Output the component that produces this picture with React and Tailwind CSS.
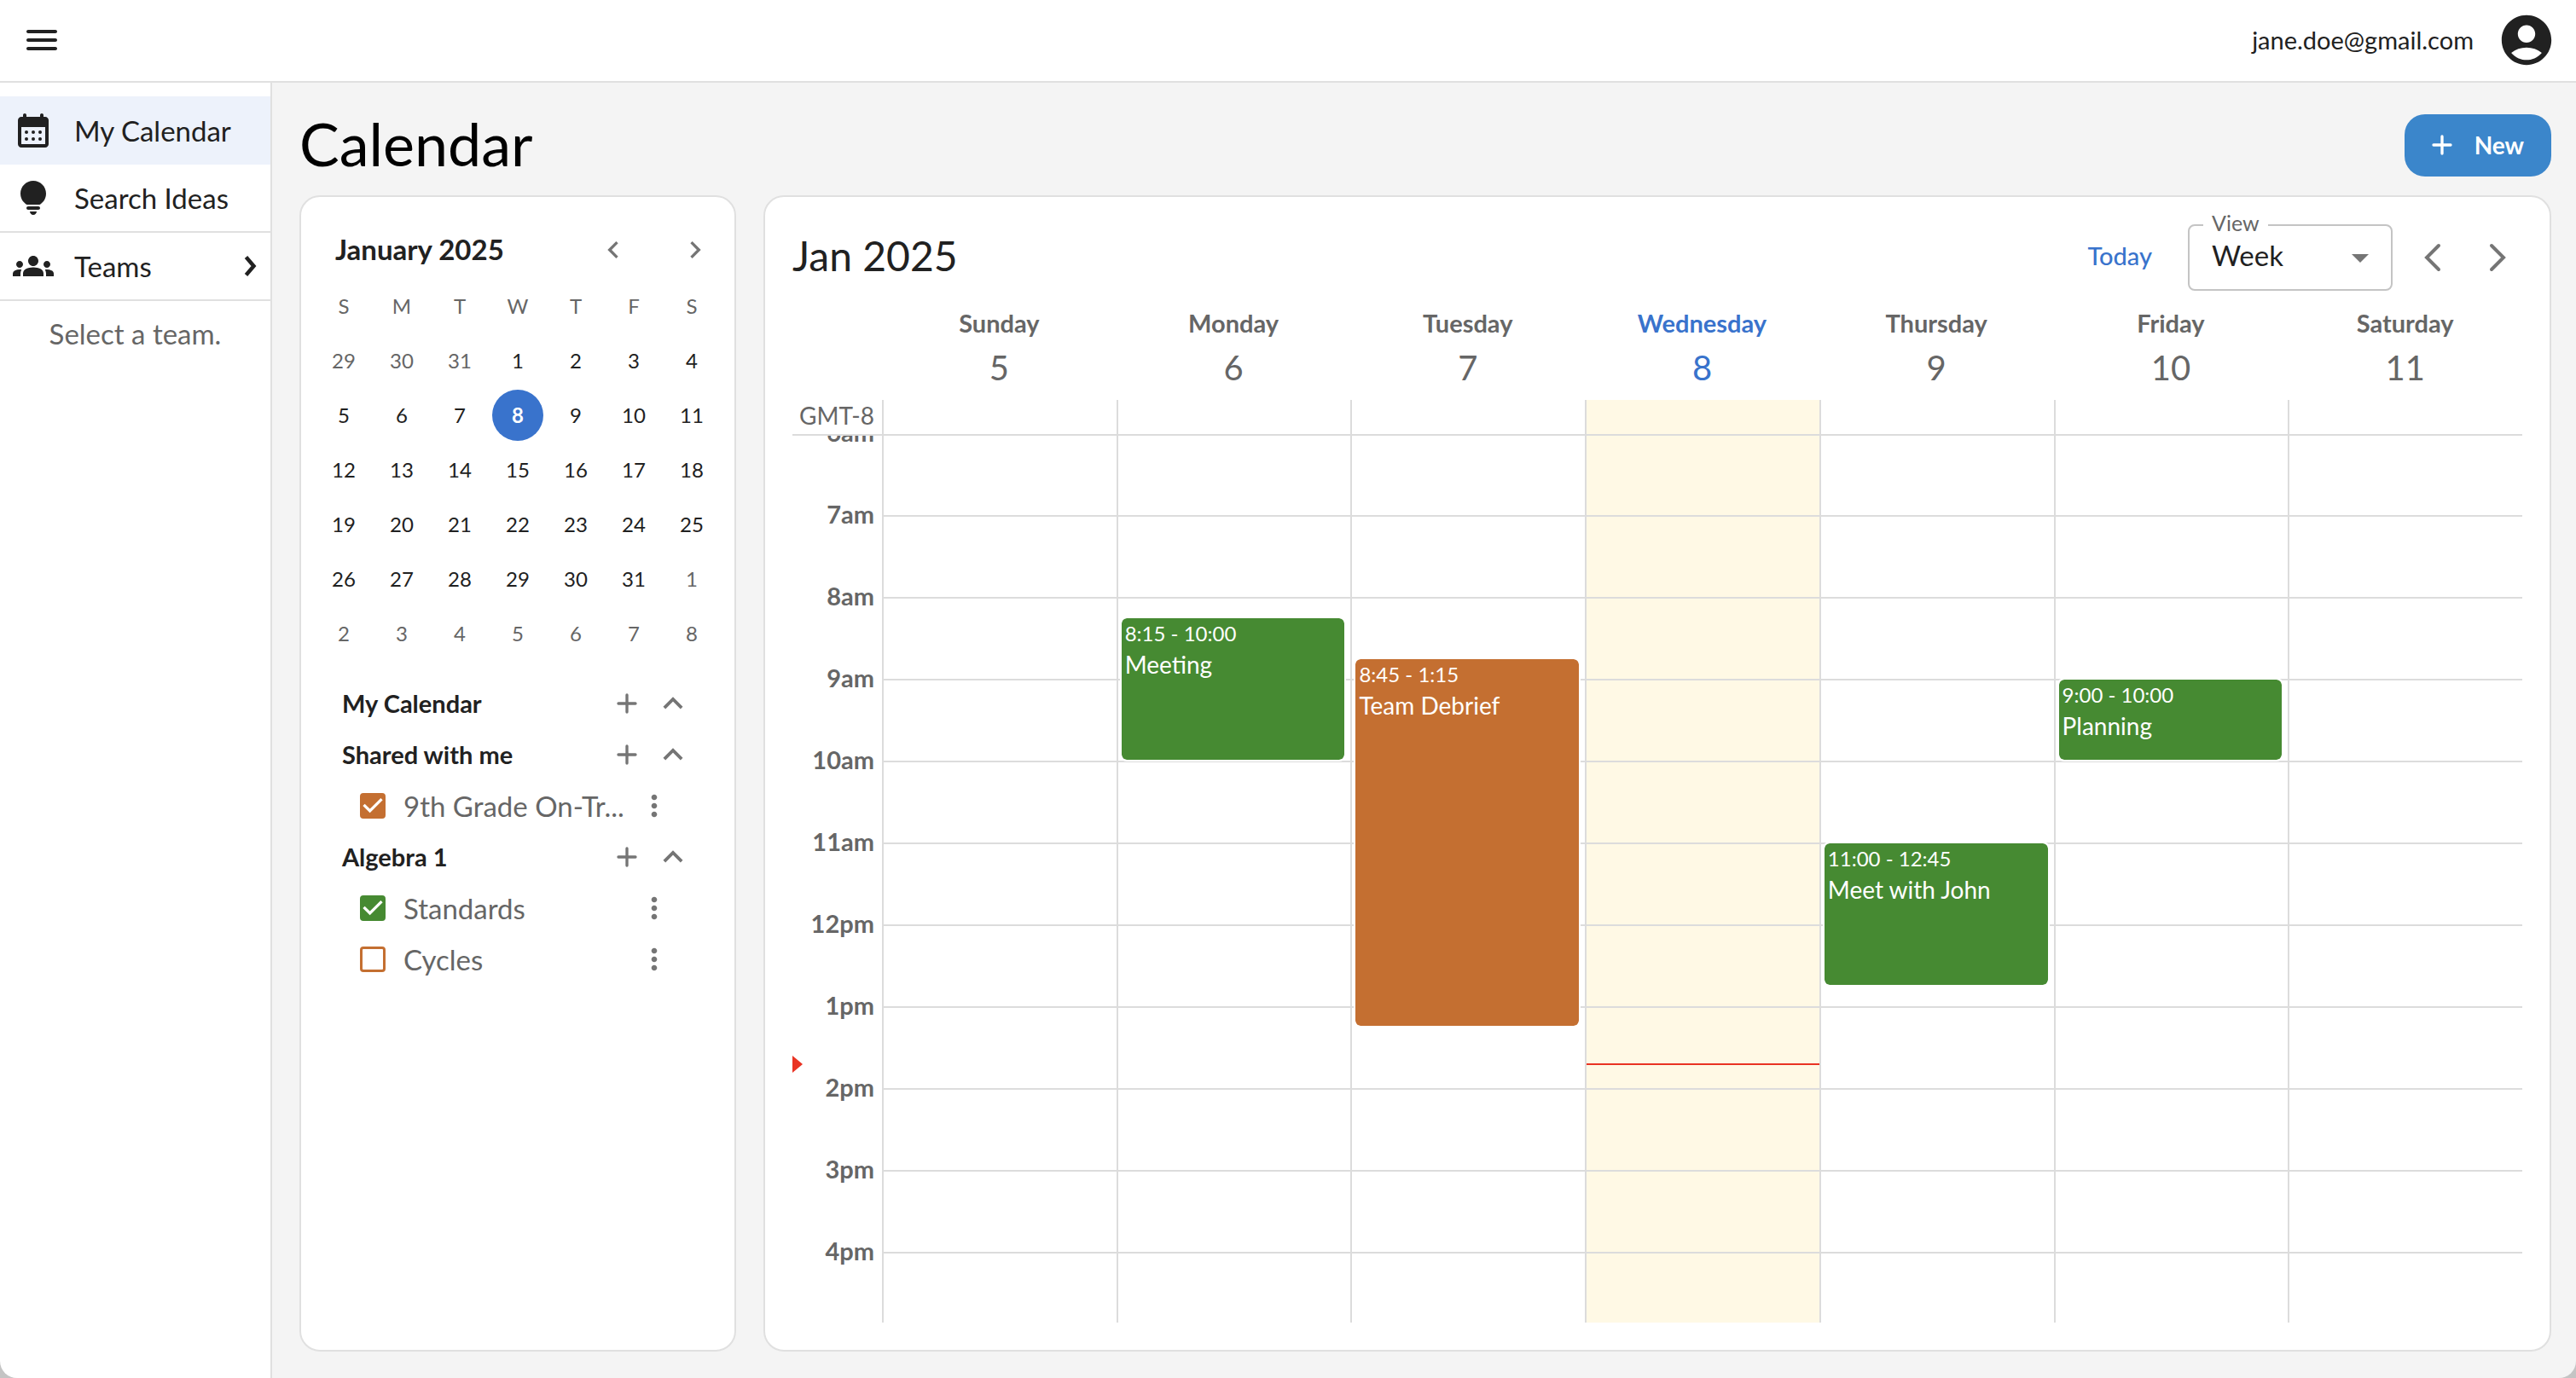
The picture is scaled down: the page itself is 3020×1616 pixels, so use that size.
import { useState } from "react";
import { MdGroups, MdMoreVert, MdArrowDropDown, MdAccountCircle } from "react-icons/md";

const WEEKDAYS = ["S", "M", "T", "W", "T", "F", "S"];

// Negative numbers are days of the neighbouring months.
const WEEKS = [
  [-29, -30, -31, 1, 2, 3, 4],
  [5, 6, 7, 8, 9, 10, 11],
  [12, 13, 14, 15, 16, 17, 18],
  [19, 20, 21, 22, 23, 24, 25],
  [26, 27, 28, 29, 30, 31, -1],
  [-2, -3, -4, -5, -6, -7, -8],
];

const GREEN = "bg-[#468a32]";
const ORANGE = "bg-[#c46f31]";

const DAYS = [
  { name: "Sunday", date: 5, events: [] },
  { name: "Monday", date: 6, events: [{ time: "8:15 - 10:00", title: "Meeting", from: 8.25, to: 10, color: GREEN }] },
  { name: "Tuesday", date: 7, events: [{ time: "8:45 - 1:15", title: "Team Debrief", from: 8.75, to: 13.25, color: ORANGE }] },
  { name: "Wednesday", date: 8, today: true, events: [] },
  { name: "Thursday", date: 9, events: [{ time: "11:00 - 12:45", title: "Meet with John", from: 11, to: 12.75, color: GREEN }] },
  { name: "Friday", date: 10, events: [{ time: "9:00 - 10:00", title: "Planning", from: 9, to: 10, color: GREEN }] },
  { name: "Saturday", date: 11, events: [] },
];

const FIRST_HOUR = 6;
const HOUR_HEIGHT = 96;
const NOW = 13.71;
const HOURS = Array.from({ length: 11 }, (_, i) => FIRST_HOUR + i);
const hourLabel = (h) => `${h > 12 ? h - 12 : h}${h < 12 ? "am" : "pm"}`;
const hourTop = (h) => (h - FIRST_HOUR) * HOUR_HEIGHT;

function Stroke({ d, className, width = 2 }) {
  return (
    <svg viewBox="0 0 24 24" fill="none" stroke="currentColor" strokeWidth={width} className={className} aria-hidden="true">
      <path d={d} />
    </svg>
  );
}

function MenuIcon() {
  return (
    <svg viewBox="0 0 24 24" fill="currentColor" className="size-12" aria-hidden="true">
      <path d="M4 18h16c.55 0 1-.45 1-1s-.45-1-1-1H4c-.55 0-1 .45-1 1s.45 1 1 1zm0-5h16c.55 0 1-.45 1-1s-.45-1-1-1H4c-.55 0-1 .45-1 1s.45 1 1 1zM3 7c0 .55.45 1 1 1h16c.55 0 1-.45 1-1s-.45-1-1-1H4c-.55 0-1 .45-1 1z" />
    </svg>
  );
}

function CalendarIcon() {
  return (
    <svg viewBox="0 0 24 24" fill="currentColor" className="size-12" aria-hidden="true">
      <path
        fillRule="evenodd"
        d="M19 4h-1V3c0-.55-.45-1-1-1s-1 .45-1 1v1H8V3c0-.55-.45-1-1-1s-1 .45-1 1v1H5c-1.11 0-1.99.9-1.99 2L3 20c0 1.1.89 2 2 2h14c1.1 0 2-.9 2-2V6c0-1.1-.9-2-2-2zm0 16H5V10h14v10z"
      />
      {[8, 12, 16].map((x) => [13, 17].map((y) => <circle key={`${x}-${y}`} cx={x} cy={y} r="1" />))}
    </svg>
  );
}

function BulbIcon() {
  return (
    <svg viewBox="0 0 24 24" fill="currentColor" className="size-12" aria-hidden="true">
      <path d="M12 22c1.1 0 2-.9 2-2h-4c0 1.1.9 2 2 2zm-3-3h6c.55 0 1-.45 1-1s-.45-1-1-1H9c-.55 0-1 .45-1 1s.45 1 1 1zm3-17C7.86 2 4.5 5.36 4.5 9.5c0 3.82 2.66 5.86 3.77 6.5h7.46c1.11-.64 3.77-2.68 3.77-6.5C19.5 5.36 16.14 2 12 2z" />
    </svg>
  );
}

function PlusIcon({ className }) {
  return (
    <svg viewBox="0 0 24 24" fill="none" stroke="currentColor" strokeWidth="2" strokeLinecap="round" className={className} aria-hidden="true">
      <path d="M6 12h12M12 6v12" />
    </svg>
  );
}

function Header() {
  return (
    <header className="flex h-[97px] shrink-0 items-center justify-between border-b-2 border-[#e0e0e0] bg-white pr-[23px] pb-[2px] pl-[25px]">
      <button type="button" aria-label="Toggle menu">
        <MenuIcon />
      </button>
      <div className="flex items-center gap-[27px]">
        <span className="text-[29px] leading-10">jane.doe@gmail.com</span>
        <button type="button" aria-label="Account">
          <MdAccountCircle className="size-[70px]" />
        </button>
      </div>
    </header>
  );
}

function NavItem({ icon, label, active, divided, chevron }) {
  return (
    <li className={divided ? "border-b-2 border-[#e0e0e0]" : ""}>
      <a
        href="#"
        aria-current={active ? "page" : undefined}
        className={`flex items-center gap-6 pr-[6px] pl-[15px] ${divided ? "h-[78px]" : "h-20"} ${active ? "bg-[#edf2fb]" : ""}`}
      >
        {icon}
        <span className="flex-1 text-[33px] leading-10">{label}</span>
        {chevron && <Stroke d="M9 5l6 7-6 7" width={3} className="size-9" />}
      </a>
    </li>
  );
}

function Sidebar() {
  return (
    <nav className="w-[319px] shrink-0 rounded-bl-[20px] border-r-2 border-[#e0e0e0] bg-white pt-4">
      <ul>
        <NavItem icon={<CalendarIcon />} label="My Calendar" active />
        <NavItem icon={<BulbIcon />} label="Search Ideas" divided />
        <NavItem icon={<MdGroups className="size-12" />} label="Teams" divided chevron />
      </ul>
      <p className="mt-[18px] text-center text-[33px] leading-10 text-[#666]">Select a team.</p>
    </nav>
  );
}

function MiniCalendar() {
  return (
    <section>
      <div className="flex h-[60px] items-center justify-between pr-[10px] pl-6">
        <h2 className="pb-[2px] text-[33px] leading-10 font-bold">January 2025</h2>
        <div className="flex gap-14 text-[#757575]">
          <button type="button" aria-label="Previous month">
            <Stroke d="M14.7 6.7L9.4 12l5.3 5.3" className="size-10" />
          </button>
          <button type="button" aria-label="Next month">
            <Stroke d="M9.3 6.7l5.3 5.3-5.3 5.3" className="size-10" />
          </button>
        </div>
      </div>
      <table className="mt-1 w-full table-fixed text-center text-2xl">
        <thead>
          <tr className="h-16 text-[#666]">
            {WEEKDAYS.map((d, i) => (
              <th key={i} className="p-0 font-normal">{d}</th>
            ))}
          </tr>
        </thead>
        <tbody>
          {WEEKS.map((week, w) => (
            <tr key={w} className="h-16">
              {week.map((d) => (
                <td key={d} className="p-0">
                  <button
                    type="button"
                    className={`size-[60px] rounded-full ${d === 8 ? "bg-[#3973cc] font-bold text-white" : d < 0 ? "text-[#666]" : ""}`}
                  >
                    {Math.abs(d)}
                  </button>
                </td>
              ))}
            </tr>
          ))}
        </tbody>
      </table>
    </section>
  );
}

function GroupRow({ label }) {
  return (
    <div className="flex h-[60px] items-center pr-[33px] pl-8">
      <h3 className="flex-1 text-[29px] leading-10 font-bold">{label}</h3>
      <button type="button" aria-label={`Add to ${label}`} className="mr-[11px] text-[#757575]">
        <PlusIcon className="size-10" />
      </button>
      <button type="button" aria-label={`Collapse ${label}`} className="text-[#757575]">
        <Stroke d="M6.7 14.7L12 9.4l5.3 5.3" className="size-[46px]" />
      </button>
    </div>
  );
}

function CalendarRow({ label, fill, edge, defaultChecked = false }) {
  const [checked, setChecked] = useState(defaultChecked);
  return (
    <div className="flex h-[60px] items-center pr-[58px] pl-[53px]">
      <label className="flex min-w-0 flex-1 items-center gap-[21px]">
        <span className="relative size-[30px] shrink-0">
          <input
            type="checkbox"
            checked={checked}
            onChange={(e) => setChecked(e.target.checked)}
            className={`block size-[30px] appearance-none rounded-[4px] border-[3px] ${edge} ${checked ? fill : "bg-white"}`}
          />
          {checked && (
            <svg viewBox="0 0 18 18" fill="none" stroke="#fff" strokeWidth="2" className="pointer-events-none absolute inset-0 size-[30px]" aria-hidden="true">
              <path d="M2.7 8.3L7 12.6 15.3 4.3" />
            </svg>
          )}
        </span>
        <span className="truncate pr-2 text-[33px] leading-10 text-[#666]">{label}</span>
      </label>
      <button type="button" aria-label={`${label} options`} className="text-[#757575]">
        <MdMoreVert className="size-10" />
      </button>
    </div>
  );
}

function CalendarPanel() {
  return (
    <aside className="w-[512px] shrink-0 overflow-hidden rounded-3xl border-2 border-[#e0e0e0] bg-white px-4 pt-8">
      <MiniCalendar />
      <section className="mt-5">
        <GroupRow label="My Calendar" />
        <GroupRow label="Shared with me" />
        <CalendarRow label="9th Grade On-Tr..." fill="bg-[#c46f31]" edge="border-[#c46f31]" defaultChecked />
        <GroupRow label="Algebra 1" />
        <CalendarRow label="Standards" fill="bg-[#468a32]" edge="border-[#468a32]" defaultChecked />
        <CalendarRow label="Cycles" fill="bg-[#c46f31]" edge="border-[#c46f31]" />
      </section>
    </aside>
  );
}

function Toolbar() {
  return (
    <div className="flex h-[78px] items-center">
      <h2 className="flex-1 pb-1 text-5xl leading-[60px]">Jan 2025</h2>
      <button type="button" className="mr-[42px] pb-1 text-[29px] leading-10 font-medium text-[#3973cc]">Today</button>
      <div className="relative mr-[22px]">
        <label htmlFor="view" className="absolute -top-[18px] left-[18px] bg-white px-[10px] text-[25px] leading-8 text-[#666]">
          View
        </label>
        <select
          id="view"
          defaultValue="Week"
          className="block h-[78px] w-[240px] appearance-none rounded-lg border-2 border-[#c4c4c4] bg-white px-[26px] pb-1 text-[33px]"
        >
          <option>Day</option>
          <option>Week</option>
          <option>Month</option>
        </select>
        <MdArrowDropDown className="pointer-events-none absolute top-[15px] right-[14px] size-12 text-[#757575]" />
      </div>
      <div className="flex gap-7 pr-[6px] text-[#757575]">
        <button type="button" aria-label="Previous week">
          <svg viewBox="0 0 48 48" fill="none" stroke="currentColor" strokeWidth="4" strokeLinecap="round" className="size-12" aria-hidden="true">
            <path d="M32 10L18 24l14 14" />
          </svg>
        </button>
        <button type="button" aria-label="Next week">
          <svg viewBox="0 0 48 48" fill="none" stroke="currentColor" strokeWidth="4" strokeLinecap="round" className="size-12" aria-hidden="true">
            <path d="M18 10l14 14-14 14" />
          </svg>
        </button>
      </div>
    </div>
  );
}

function EventBlock({ event }) {
  return (
    <button
      type="button"
      style={{ top: hourTop(event.from) + 1, height: (event.to - event.from) * HOUR_HEIGHT - 2 }}
      className={`absolute right-[7px] left-1 flex flex-col items-start rounded-md px-1 pt-[2px] text-left text-white outline-2 outline-white ${event.color}`}
    >
      <span className="text-2xl leading-8">{event.time}</span>
      <span className="text-[28px] leading-10">{event.title}</span>
    </button>
  );
}

function WeekGrid() {
  return (
    <div className="flex min-h-0 flex-1 flex-col text-[#666]">
      <div className="flex h-[128px] shrink-0">
        <div className="w-[105px] shrink-0" />
        <div className="grid flex-1 grid-cols-7 pt-[18px] text-center">
          {DAYS.map((day) => (
            <div key={day.name} className={day.today ? "text-[#3973cc]" : ""}>
              <div className="text-[29px] leading-10 font-bold">{day.name}</div>
              <div className="mt-1 text-[40px] leading-[56px]">{day.date}</div>
            </div>
          ))}
        </div>
      </div>
      <div className="flex h-[42px] shrink-0 border-b-2 border-[#dcdcdc]">
        <div className="w-[105px] shrink-0 pr-[9px] text-right text-[28px] leading-9">GMT-8</div>
        <div className="grid flex-1 grid-cols-7">
          {DAYS.map((day) => (
            <div key={day.name} className={`border-l-2 border-[#dcdcdc] ${day.today ? "bg-[#fff9e5]" : ""}`} />
          ))}
        </div>
      </div>
      <div className="min-h-0 flex-1 overflow-hidden">
        <div className="-mt-[3px] flex">
          <div className="relative w-[105px] shrink-0">
            {HOURS.map((h) => (
              <div key={h} className="h-24 pr-[9px]">
                <div className="flex h-0 items-center justify-end text-[29px] font-bold">
                  <span className="pb-[2px]">{hourLabel(h)}</span>
                </div>
              </div>
            ))}
            <div
              style={{ top: hourTop(NOW) - 10 }}
              className="absolute left-0 border-y-10 border-l-12 border-y-transparent border-l-[#e93323]"
            />
          </div>
          <div className="grid flex-1 grid-cols-7">
            {DAYS.map((day) => (
              <div key={day.name} className={`relative border-l-2 border-[#dcdcdc] ${day.today ? "bg-[#fff9e5]" : ""}`}>
                {HOURS.map((h) => (
                  <div key={h} className="h-24 border-t-2 border-[#dcdcdc]" />
                ))}
                {day.events.map((event) => (
                  <EventBlock key={event.title} event={event} />
                ))}
                {day.today && <div style={{ top: hourTop(NOW) - 1 }} className="absolute inset-x-0 h-[2px] bg-[#e93323]" />}
              </div>
            ))}
          </div>
        </div>
      </div>
    </div>
  );
}

export default function App() {
  return (
    <div className="flex h-screen flex-col bg-[#f4f4f4] font-['Lato',sans-serif] text-[#212121]">
      <Header />
      <div className="flex min-h-0 flex-1 bg-[#c4c4c4]">
        <Sidebar />
        <main className="flex min-w-0 flex-1 flex-col rounded-br-[20px] bg-[#f4f4f4] pr-[29px] pb-[31px] pl-8">
          <div className="flex h-[132px] shrink-0 items-center justify-between pt-[14px]">
            <h1 className="pb-1 text-[70px] leading-20 text-black">Calendar</h1>
            <button
              type="button"
              className="flex h-[73px] items-center gap-[18px] rounded-3xl bg-[#3b86cb] pr-8 pl-6 text-[28px] font-bold text-white"
            >
              <PlusIcon className="size-10" />
              New
            </button>
          </div>
          <div className="flex min-h-0 flex-1 gap-8">
            <CalendarPanel />
            <section className="flex min-w-0 flex-1 flex-col rounded-3xl border-2 border-[#e0e0e0] bg-white px-8 py-8">
              <Toolbar />
              <WeekGrid />
            </section>
          </div>
        </main>
      </div>
    </div>
  );
}
